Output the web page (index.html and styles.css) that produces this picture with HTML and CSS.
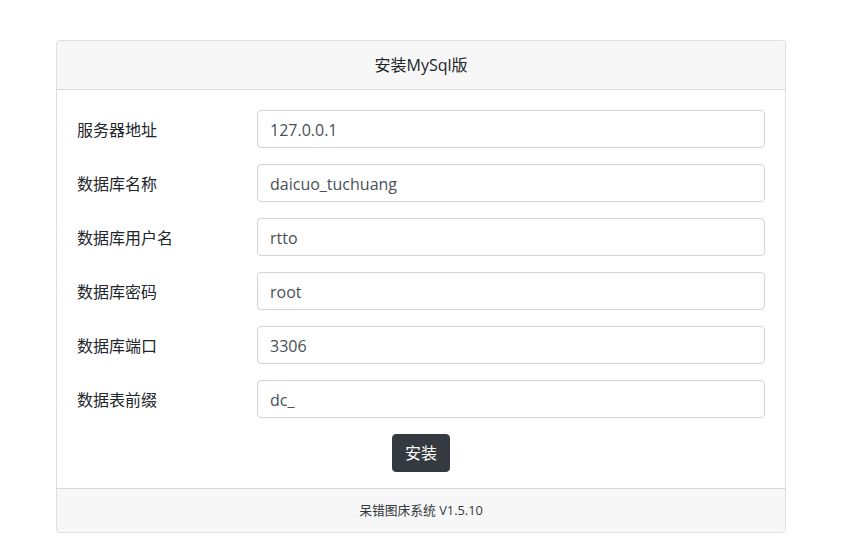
FILE: index.html
```html
<!DOCTYPE html>
<html lang="zh-CN">
<head>
<meta charset="utf-8">
<title>安装MySql版</title>
<link rel="stylesheet" href="styles.css">
</head>
<body>
<div class="card">
  <div class="card-header">安装MySql版</div>
  <form class="card-body">
    <div class="row"><label class="label">服务器地址</label><div class="field"><input class="input" type="text" value="127.0.0.1"></div></div>
    <div class="row"><label class="label">数据库名称</label><div class="field"><input class="input" type="text" value="daicuo_tuchuang"></div></div>
    <div class="row"><label class="label">数据库用户名</label><div class="field"><input class="input" type="text" value="rtto"></div></div>
    <div class="row"><label class="label">数据库密码</label><div class="field"><input class="input" type="text" value="root"></div></div>
    <div class="row"><label class="label">数据库端口</label><div class="field"><input class="input" type="text" value="3306"></div></div>
    <div class="row"><label class="label">数据表前缀</label><div class="field"><input class="input" type="text" value="dc_"></div></div>
    <div class="actions"><button class="btn" type="button">安装</button></div>
  </form>
  <div class="card-footer">呆错图床系统 V1.5.10</div>
</div>
</body>
</html>
```
FILE: styles.css
```css
* { box-sizing: border-box; }
html, body { margin: 0; padding: 0; background: #fff; }
body {
  font-family: "Open Sans", "Noto Sans CJK SC", sans-serif;
  font-size: 16px;
  line-height: 1.5;
  color: #212529;
  padding: 40px 0 0 56px;
}
.card {
  width: 730px;
  border: 1px solid rgba(0,0,0,.125);
  border-radius: 4px;
  background: #fff;
}
.card-header {
  background: #f7f7f7;
  border-bottom: 1px solid rgba(0,0,0,.125);
  padding: 12px 20px;
  text-align: center;
  height: 49px;
  border-radius: 3px 3px 0 0;
}
.card-body {
  margin: 0;
  padding: 20px 20px 16px;
}
.row {
  display: flex;
  align-items: center;
  margin-bottom: 16px;
}
.label {
  width: 180px;
  flex: none;
  padding-top: 1px;
}
.field { flex: 1; }
.input {
  display: block;
  width: 100%;
  height: 38px;
  padding: 7px 12px 5px;
  font: inherit;
  font-size: 16px;
  color: #495057;
  background: #fff;
  border: 1px solid #ced4da;
  border-radius: 4px;
  outline: none;
}
.actions {
  display: flex;
  justify-content: center;
}
.btn {
  font: inherit;
  font-size: 16px;
  color: #fff;
  background: #343a40;
  border: 1px solid #343a40;
  border-radius: 4px;
  height: 38px;
  padding: 0 12px;
  line-height: 1;
}
.card-footer {
  background: #f7f7f7;
  border-top: 1px solid rgba(0,0,0,.125);
  padding: 12px 20px;
  text-align: center;
  font-size: 12.8px;
  color: #343a40;
  height: 44px;
  border-radius: 0 0 3px 3px;
}
```
